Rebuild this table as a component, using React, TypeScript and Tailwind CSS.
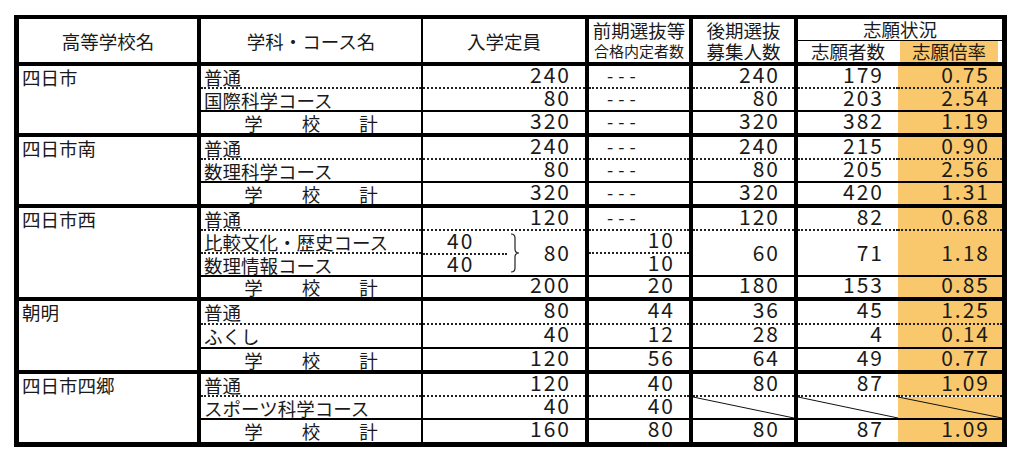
import React from "react";

type Line = "block" | "dot" | "sum";

const TOP: Record<Line, string> = {
  block: "border-t-4 border-t-black",
  dot: "border-t-2 border-t-[#222] [border-top-style:dotted]",
  sum: "border-t-2 border-t-black",
};

// left border of each column (outer frame is drawn by the wrapper)
const LEFT = [
  "",
  "border-l-4 border-l-black",
  "border-l-2 border-l-black",
  "border-l-4 border-l-black",
  "border-l-4 border-l-black",
  "border-l-4 border-l-black",
  "",
];

const ORANGE = "bg-[#f9c86c]";

type Row = { c: string; v: string[]; h: string };

const blocks: { name: string; rows: Row[] }[] = [
  {
    name: "四日市",
    rows: [
      { c: "普通", v: ["240", "---", "240", "179", "0.75"], h: "h-[24px]" },
      { c: "国際科学コース", v: ["80", "---", "80", "203", "2.54"], h: "h-[23px]" },
      { c: "", v: ["320", "---", "320", "382", "1.19"], h: "h-[24px]" },
    ],
  },
  {
    name: "四日市南",
    rows: [
      { c: "普通", v: ["240", "---", "240", "215", "0.90"], h: "h-[24px]" },
      { c: "数理科学コース", v: ["80", "---", "80", "205", "2.56"], h: "h-[23px]" },
      { c: "", v: ["320", "---", "320", "420", "1.31"], h: "h-[24px]" },
    ],
  },
];

const asake: Row[] = [
  { c: "普通", v: ["80", "44", "36", "45", "1.25"], h: "h-[25px]" },
  { c: "ふくし", v: ["40", "12", "28", "4", "0.14"], h: "h-[24px]" },
  { c: "", v: ["120", "56", "64", "49", "0.77"], h: "h-[24px]" },
];

const NUMTXT = "text-[21px] leading-[14px] tracking-[2px]";

function NumCell({ v, col, line, rowSpan }: { v: string; col: number; line: Line; rowSpan?: number }) {
  if (v === "---") {
    return (
      <td className={`${LEFT[col]} ${TOP[line]} p-0 pb-[4px] pl-[18px] text-left align-middle text-[18px] leading-[14px] tracking-[5px]`}>
        ---
      </td>
    );
  }
  const pad = col === 6 ? "pr-[12px] " + ORANGE : "pr-[14px]";
  const pb = rowSpan ? "pb-[3px]" : "pb-[6px]";
  return (
    <td
      rowSpan={rowSpan}
      className={`${LEFT[col]} ${TOP[line]} ${pad} ${pb} pt-0 pl-0 text-right align-middle ${NUMTXT}`}
    >
      {v}
    </td>
  );
}

function CourseCell({ name, line }: { name: string; line: Line }) {
  if (name === "") {
    return (
      <td className={`${LEFT[1]} ${TOP[line]} p-0 align-middle`}>
        <div className="flex justify-center gap-[39px] text-[18.5px] leading-[18px]">
          <span>学</span>
          <span>校</span>
          <span>計</span>
        </div>
      </td>
    );
  }
  return (
    <td className={`${LEFT[1]} ${TOP[line]} whitespace-nowrap p-0 pl-[3px] text-left align-middle text-[18.5px] leading-[18px]`}>
      {name}
    </td>
  );
}

function DiagCell({ col, line }: { col: number; line: Line }) {
  return (
    <td className={`${LEFT[col]} ${TOP[line]} relative p-0 ${col === 6 ? ORANGE : ""}`}>
      <svg className="absolute inset-0 h-full w-full" viewBox="0 0 100 100" preserveAspectRatio="none">
        <line x1="0" y1="0" x2="100" y2="100" stroke="#111" strokeWidth="1" vectorEffect="non-scaling-stroke" />
      </svg>
    </td>
  );
}

const schoolCls = `${TOP.block} p-0 pt-[1px] pl-[3px] align-top text-left text-[18.5px] leading-[20px]`;

function Block({ name, rows }: { name: string; rows: Row[] }) {
  return (
    <>
      {rows.map((r, i) => {
        const line: Line = i === 0 ? "block" : i === rows.length - 1 ? "sum" : "dot";
        return (
          <tr key={i} className={r.h}>
            {i === 0 && (
              <td rowSpan={rows.length} className={schoolCls}>
                {name}
              </td>
            )}
            <CourseCell name={r.c} line={line} />
            {r.v.map((v, j) => (
              <NumCell key={j} v={v} col={j + 2} line={line} />
            ))}
          </tr>
        );
      })}
    </>
  );
}

export default function App() {
  return (
    <div className="h-[462px] w-[1022px] bg-white text-[#1a1a1a] font-['Noto_Sans_CJK_JP','Noto_Sans',sans-serif]">
      <div className="ml-[14px] mt-[15px] w-[993px] border-[5px] border-t-4 border-black">
        <table className="w-[983px] table-fixed border-collapse">
          <colgroup>
            <col className="w-[180px]" />
            <col className="w-[223px]" />
            <col className="w-[165px]" />
            <col className="w-[104px]" />
            <col className="w-[105px]" />
            <col className="w-[102px]" />
            <col className="w-[104px]" />
          </colgroup>
          <thead>
            <tr className="h-[21px]">
              <th rowSpan={2} className="p-0 text-center align-middle text-[18.5px] leading-[20px] font-normal">
                高等学校名
              </th>
              <th rowSpan={2} className={`${LEFT[1]} p-0 text-center align-middle text-[18.5px] leading-[20px] font-normal`}>
                学科・コース名
              </th>
              <th rowSpan={2} className={`${LEFT[2]} p-0 text-center align-middle text-[18.5px] leading-[20px] font-normal`}>
                入学定員
              </th>
              <th rowSpan={2} className={`${LEFT[3]} p-0 align-top font-normal`}>
                <div className="flex flex-col items-center">
                  <span className="text-[18.5px] leading-[22px]">前期選抜等</span>
                  <span className="text-[15px] leading-[20px]">合格内定者数</span>
                </div>
              </th>
              <th rowSpan={2} className={`${LEFT[4]} p-0 align-top font-normal`}>
                <div className="flex flex-col items-center">
                  <span className="text-[18.5px] leading-[22px]">後期選抜</span>
                  <span className="text-[18.5px] leading-[20px]">募集人数</span>
                </div>
              </th>
              <th colSpan={2} className={`${LEFT[5]} border-b border-b-black p-0 text-center align-middle text-[18.5px] leading-[18px] font-normal`}>
                志願状況
              </th>
            </tr>
            <tr className="h-[24px]">
              <th className={`${LEFT[5]} p-0 text-center align-middle text-[18.5px] leading-[18px] font-normal`}>志願者数</th>
              <th className="p-0 align-top font-normal">
                <div className={`${ORANGE} ml-[2px] mr-[4px] flex h-[21px] items-center justify-center text-[18.5px] leading-[18px]`}>志願倍率</div>
              </th>
            </tr>
          </thead>
          <tbody>
            {blocks.map((b) => (
              <Block key={b.name} name={b.name} rows={b.rows} />
            ))}

            {/* 四日市西 */}
            <tr className="h-[24px]">
              <td rowSpan={4} className={schoolCls}>
                四日市西
              </td>
              <CourseCell name="普通" line="block" />
              <NumCell v="120" col={2} line="block" />
              <NumCell v="---" col={3} line="block" />
              <NumCell v="120" col={4} line="block" />
              <NumCell v="82" col={5} line="block" />
              <NumCell v="0.68" col={6} line="block" />
            </tr>
            <tr className="h-[23px]">
              <CourseCell name="比較文化・歴史コース" line="dot" />
              <td rowSpan={2} className={`${LEFT[2]} ${TOP.dot} p-0 align-top`}>
                <div className="flex h-[44px] items-center">
                  <div className={`flex w-[84px] flex-col self-stretch ${NUMTXT}`}>
                    <div className="flex h-[22px] items-center pb-[4px] pl-[24px]">40</div>
                    <div className="flex h-[22px] items-center border-t-2 border-dotted border-[#222] pb-[4px] pl-[24px]">40</div>
                  </div>
                  <svg width="10" height="40" viewBox="0 0 10 40" className="ml-[3px]">
                    <path d="M1 1 Q5 1 5 5 L5 16 Q5 20 9 20 Q5 20 5 24 L5 35 Q5 39 1 39" fill="none" stroke="#222" strokeWidth="1.2" />
                  </svg>
                  <div className={`flex-1 pb-[3px] pr-[14px] text-right ${NUMTXT}`}>80</div>
                </div>
              </td>
              <NumCell v="10" col={3} line="dot" />
              <NumCell v="60" col={4} line="dot" rowSpan={2} />
              <NumCell v="71" col={5} line="dot" rowSpan={2} />
              <NumCell v="1.18" col={6} line="dot" rowSpan={2} />
            </tr>
            <tr className="h-[23px]">
              <CourseCell name="数理情報コース" line="dot" />
              <NumCell v="10" col={3} line="dot" />
            </tr>
            <tr className="h-[23px]">
              <CourseCell name="" line="sum" />
              <NumCell v="200" col={2} line="sum" />
              <NumCell v="20" col={3} line="sum" />
              <NumCell v="180" col={4} line="sum" />
              <NumCell v="153" col={5} line="sum" />
              <NumCell v="0.85" col={6} line="sum" />
            </tr>

            <Block name="朝明" rows={asake} />

            {/* 四日市四郷 */}
            <tr className="h-[24px]">
              <td rowSpan={3} className={schoolCls}>
                四日市四郷
              </td>
              <CourseCell name="普通" line="block" />
              <NumCell v="120" col={2} line="block" />
              <NumCell v="40" col={3} line="block" />
              <NumCell v="80" col={4} line="block" />
              <NumCell v="87" col={5} line="block" />
              <NumCell v="1.09" col={6} line="block" />
            </tr>
            <tr className="h-[23px]">
              <CourseCell name="スポーツ科学コース" line="dot" />
              <NumCell v="40" col={2} line="dot" />
              <NumCell v="40" col={3} line="dot" />
              <DiagCell col={4} line="dot" />
              <DiagCell col={5} line="dot" />
              <DiagCell col={6} line="dot" />
            </tr>
            <tr className="h-[23px]">
              <CourseCell name="" line="sum" />
              <NumCell v="160" col={2} line="sum" />
              <NumCell v="80" col={3} line="sum" />
              <NumCell v="80" col={4} line="sum" />
              <NumCell v="87" col={5} line="sum" />
              <NumCell v="1.09" col={6} line="sum" />
            </tr>
          </tbody>
        </table>
      </div>
    </div>
  );
}
